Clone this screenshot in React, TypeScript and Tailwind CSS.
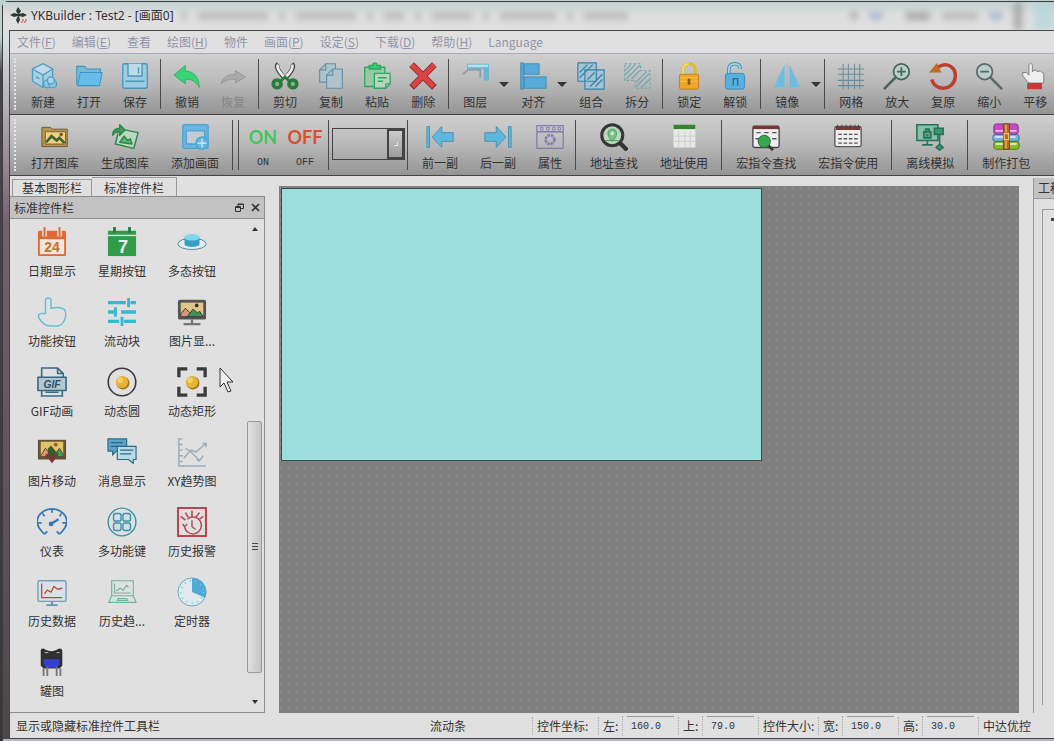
import { Fragment, type ReactNode } from 'react';

const ICONS: Record<string, ReactNode> = {
  create: (
    <g fill="none" stroke="#4f9fc4" strokeWidth="1.5" strokeLinejoin="round">
      <path d="M16 2 4 8v14l12 7 11-6V8z" fill="#a9cfe2" />
      <path d="m4 8 12 7 11-7-11-6z" fill="#c2dbe6" />
      <path d="M16 15v14M8 17l4 2" />
      <circle cx="21" cy="25" r="4.500" fill="#8cc4e2" />
      <circle cx="27" cy="25" r="4.500" fill="#8cc4e2" />
      <circle cx="25" cy="21" r="4" fill="#a9d3e8" />
    </g>
  ),
  open: (
    <g stroke="#3e96c4" strokeWidth="1.2" strokeLinejoin="round">
      <path d="M2 26V5h9l3 3h15v5" fill="#79b9d8" />
      <path d="M6 12h25l-3 15H3z" fill="#66bdea" />
    </g>
  ),
  save: (
    <g fill="none" stroke="#4796bd" strokeWidth="1.5">
      <rect x="2" y="2" width="28" height="28" rx="2" fill="#9fcbe0" />
      <path d="M8 2v14h16V2" fill="#bfdbe6" />
      <path d="M20 6v7M5 22h22" />
    </g>
  ),
  undo: <path d="M14 4 1 15l13 10v-5c7-1 12 2 16 9 0-10-5-18-16-19z" fill="#36d475" stroke="#35a960" />,
  redo: <path d="M19 10l11 7-11 7v-4c-7-1-12 1-17 5 3-8 8-11 17-11z" fill="#aaa" stroke="#949494" />,
  cut: (
    <g>
      <path d="M8 2c-3 3 0 8 8 17M24 2c3 3 0 8-8 17" fill="none" stroke="#444" strokeWidth="5" />
      <path d="M8 3c-2 3 1 8 8 15M24 3c2 3-1 8-8 15" fill="none" stroke="#eee" strokeWidth="3" />
      <circle cx="7" cy="25" r="4.500" fill="#8bad90" stroke="#287c39" strokeWidth="4" />
      <circle cx="25" cy="25" r="4.500" fill="#8bad90" stroke="#287c39" strokeWidth="4" />
      <path d="m11 22 5-5 5 5" fill="none" stroke="#287c39" strokeWidth="3" />
    </g>
  ),
  copy: (
    <g fill="#afc3cc" stroke="#6590a5" strokeWidth="1.3">
      <path d="M10 2h11v21H3V9z" />
      <path d="M18 8h11v22H11V15z" />
      <path d="M18 8v7h-7M10 2v7H3" fill="none" />
    </g>
  ),
  paste: (
    <g stroke="#2fa560" strokeWidth="1.5" strokeLinejoin="round">
      <path d="M2 6h23v22H2z" fill="#98c8a6" />
      <path d="M7 8V4h4c0-4 5-4 5 0h4v4z" fill="#35ce72" />
      <path d="M13 13h18v12l-5 5H13z" fill="#b7d5b9" />
      <path d="M17 18h10M17 22h6M31 25h-5v5" fill="none" />
    </g>
  ),
  remove: (
    <g>
      <path d="m3 3 26 26M29 3 3 29" stroke="#922c2d" strokeWidth="7.500" />
      <path d="m3 3 25 25M29 3 4 28" stroke="#dc4444" strokeWidth="5.500" />
    </g>
  ),
  layer: (
    <g>
      <path d="M7 2h25v19h-6V8H7z" fill="#6fb3cf" />
      <path d="M8 3h23v3H8z" fill="#b6e2e9" />
      <path d="m2 14 6-5h14v9" fill="none" stroke="#8b9fa5" strokeWidth="2" />
    </g>
  ),
  align: (
    <g stroke="#3989b5" fill="#58aadb">
      <path d="M2 1h3v30H2z" />
      <path d="M6 2h17v12H6zM6 17h25v13H6z" />
    </g>
  ),
  group: (
    <g fill="#a4c4d4" stroke="#367fa8" strokeWidth="1.300">
      <path d="M1 1h21v8h9v22H9v-9H1z" />
      <path d="M9 9h13v13H9zM3 12 12 3M3 18 18 3M12 20l8-8M15 28l14-14M21 28l8-8" fill="none" />
    </g>
  ),
  split: (
    <g fill="none" stroke="#6ba9ad" strokeWidth="1.3">
      <path d="M2 2h18v8h11v20H14v-9H2z" strokeDasharray="3 2" />
      <path d="m3 9 6-6M3 14 14 3M4 19 19 4M10 19l9-9M15 23l12-12M15 28l15-15M21 29l9-9" />
    </g>
  ),
  lock: (
    <g>
      <path d="M9 14V9q0-7 7-7t7 7v5" fill="none" stroke="#d9bb2c" strokeWidth="3.5" />
      <path d="M9 14V9q0-7 7-7" fill="none" stroke="#f1e363" strokeWidth="2" />
      <rect x="5" y="14" width="22" height="17" rx="2" fill="#eda62a" stroke="#c67816" />
      <path d="M6 18h20M6 22h20" stroke="#fac74e" />
      <path d="M16 19v7" stroke="#8a5c19" strokeWidth="3" />
    </g>
  ),
  unlock: (
    <g>
      <path d="M9 14V8q0-6 7-6 6 0 6 6" fill="none" stroke="#468eae" strokeWidth="4" />
      <path d="M9 14V8q0-6 7-6 6 0 6 6" fill="none" stroke="#a4d5e7" strokeWidth="2" />
      <rect x="5" y="13" width="22" height="18" rx="3" fill="#57b1e0" stroke="#348bb9" />
      <path d="M14 27v-8h5v8" fill="none" stroke="#34657b" strokeWidth="1.5" />
    </g>
  ),
  mirror: (
    <g>
      <path d="M13 4v25H1zM19 4v25h12z" fill="#6ebce1" stroke="#86bfd4" />
      <path d="M16 1v30" stroke="#84b8cc" strokeDasharray="3 1" />
    </g>
  ),
  grid: <path d="M7 2v29M13 2v29M20 2v29M26 2v29M1 8h30M1 14h30M1 21h30M1 27h30" stroke="#6b8c9d" strokeWidth="1.2" />,
  zoomIn: (
    <g fill="none" stroke="#45665b">
      <path d="M14 18 1 31" strokeWidth="3" />
      <circle cx="21" cy="11" r="9" fill="#b9cfc7" strokeWidth="2" />
      <path d="M21 6v10M16 11h10" strokeWidth="2" />
    </g>
  ),
  reset: (
    <g>
      <path d="M10 6c11-7 21 0 20 11-1 15-22 18-27 3" fill="none" stroke="#b84231" strokeWidth="4" />
      <path d="M0 12 9 1l5 11z" fill="#c66725" />
    </g>
  ),
  zoomOut: (
    <g fill="none" stroke="#5b6864">
      <path d="m17 17 14 14" strokeWidth="3" />
      <circle cx="11" cy="11" r="9" fill="#b8cfcd" strokeWidth="2" />
      <path d="M6 11h10" strokeWidth="2" />
    </g>
  ),
  pan: (
    <g>
      <path d="M9 24 2 16v-4h4l3 3V3q2-3 4 0v8l3-2 3 2 3-1 2 2q3 0 2 4v8z" fill="#eee" stroke="#777" />
      <rect x="7" y="24" width="17" height="7" rx="1" fill="#d23434" />
    </g>
  ),
  openLib: (
    <g>
      <path d="M1 5h10l2 2h17v20H1z" fill="#b8944b" stroke="#635333" />
      <path d="M5 10h23v14H5z" fill="#edd184" stroke="#6f593a" />
      <path d="m6 22 6-7 6 5 3-3 6 6" fill="none" stroke="#40602f" strokeWidth="3" />
      <circle cx="23" cy="13" r="2" fill="#76522b" />
    </g>
  ),
  buildLib: (
    <g stroke="#2f8750" strokeWidth="1.7" strokeLinejoin="round">
      <path d="m12 7 19 4-5 18-21-5 3-12" fill="#b9d9bd" />
      <path d="m10 22 5-7 4 5 3-2 2 6z" fill="#58b775" />
      <path d="M2 14Q1 7 10 6V2l6 6-6 6v-4q-6 0-8 4z" fill="#399e58" />
    </g>
  ),
  addScreen: (
    <g stroke="#4da3d2" strokeWidth="1.500">
      <rect x="2" y="2" width="29" height="27" rx="2" fill="#6ab6e0" />
      <path d="M6 9h21v15H6z" fill="#c2ccd2" />
      <circle cx="24" cy="23" r="7" fill="#67b3e0" />
      <path d="M24 18v10M19 23h10" stroke="#d7edf5" />
    </g>
  ),
  prev: (
    <g fill="#5db7df" stroke="#468eae">
      <path d="M1 4h3v24H1zM7 16 18 4v7h13v10H18v7z" />
    </g>
  ),
  next: (
    <g fill="#5db7df" stroke="#468eae">
      <path d="M28 4h3v24h-3zM25 16 14 4v7H1v10h13v7z" />
    </g>
  ),
  props: (
    <g fill="none" stroke="#817db0" strokeWidth="1.5">
      <path d="M1 3h30v26H1zM1 10h30" />
      <path d="M5 5h3v3H5zM12 5h3v3h-3zM19 5h3v3h-3zM25 5h3v3h-3z" strokeWidth="1" />
      <circle cx="16" cy="19" r="5" strokeDasharray="3 1" strokeWidth="3" />
    </g>
  ),
  addrFind: (
    <g>
      <path d="m22 22 9 9" stroke="#333" strokeWidth="5" />
      <circle cx="14" cy="14" r="12" fill="#bdd3bf" stroke="#363636" strokeWidth="3.5" />
      <path d="M14 21c-8-8-5-14 0-14s8 6 0 14zM7 20h14" fill="#79c589" stroke="#3d9b54" />
      <circle cx="14" cy="12" r="2" fill="#d8e9da" />
    </g>
  ),
  addrUse: (
    <g>
      <path d="M4 4h25v24H4z" fill="#e8e8e8" />
      <path d="M4 15h25M4 21h25M10 9v19M17 9v19M23 9v19" stroke="#ccc" />
      <path d="M4 2h25v5H4z" fill="#33862c" />
    </g>
  ),
  macroFind: (
    <g>
      <rect x="1" y="4" width="30" height="24" rx="2" fill="#eee" stroke="#444" strokeWidth="1.500" />
      <path d="M1 3h30v4H1z" fill="#743838" />
      <path d="M5 11h5M14 11h5M23 11h5M23 18h5M4 18h4" stroke="#555" strokeWidth="1.5" />
      <path d="m19 26 5 5" stroke="#333" strokeWidth="3" />
      <circle cx="14" cy="21" r="7" fill="#35a84d" stroke="#2c5534" />
    </g>
  ),
  macroUse: (
    <g>
      <rect x="1" y="4" width="30" height="23" rx="2" fill="#eee" stroke="#555" strokeWidth="1.5" />
      <path d="M2 4h28v4H2z" fill="#793c38" />
      <path d="M5 13h22M5 18h22M5 23h22" stroke="#555" strokeWidth="1.5" strokeDasharray="4 2" />
      <path d="M4 2v4M9 2v4M14 2v4M19 2v4M24 2v4M28 2v4" stroke="#444" />
    </g>
  ),
  offline: (
    <g stroke="#267258" strokeWidth="1.8" fill="none">
      <path d="M1 2h24v18H1zM13 20v4M7 25h12" fill="#89bea9" />
      <path d="M9 10h8v7H9zM11 10V7h4v3M13 13v2" fill="#54a486" />
      <path d="M21 6h10v7H21zM27 13v11M23 28l4-4 4 4-4 3z" fill="#3d9473" />
    </g>
  ),
  pack: (
    <g>
      <rect x="2" y="1" width="28" height="12" rx="3" fill="#c54bc5" stroke="#803286" />
      <rect x="1" y="13" width="30" height="8" rx="3" fill="#6db4e6" stroke="#356780" />
      <rect x="2" y="21" width="29" height="9" rx="3" fill="#8cbc28" stroke="#486d20" />
      <path d="M4 9h24M3 16h24M4 24h24" stroke="#eee" strokeWidth="1.5" />
      <path d="M13 1h7v29h-7z" fill="#b7652a" stroke="#71421f" />
      <path d="M14 12h5v7h-5zM16 2v8M16 20v9" fill="none" stroke="#e6c65c" strokeWidth="1.500" />
    </g>
  ),
  date: (
    <g>
      <rect x="1" y="4" width="30" height="27" rx="2" fill="#df6933" />
      <path d="M3 13h26v16H3z" fill="#f1e7dc" />
      <path d="M8 0v10M24 0v10" stroke="#e0e0e0" strokeWidth="5" />
      <path d="M8 0v10M24 0v10" stroke="#df6933" strokeWidth="2" />
      <text x="16" y="27" textAnchor="middle" fontSize="15" fontWeight="700" fontFamily="Liberation Sans" fill="#c86f2d">24</text>
    </g>
  ),
  week: (
    <g>
      <path d="M1 4h30v27H1z" fill="#309c47" />
      <path d="M8 0v6M24 0v6" stroke="#277b3d" strokeWidth="3" />
      <path d="M1 9h30" stroke="#e0e0e0" strokeWidth="1.5" />
      <text x="17" y="28" textAnchor="middle" fontSize="20" fontWeight="700" fontFamily="Liberation Sans" fill="#eee">7</text>
    </g>
  ),
  multi: (
    <g>
      <ellipse cx="16" cy="18" rx="15" ry="6" fill="#e8eeee" stroke="#528b9b" />
      <path d="M8 11v8c2 3 14 3 16 0v-8z" fill="#3a9fc4" />
      <ellipse cx="16" cy="11" rx="8" ry="3.500" fill="#82d6ea" />
    </g>
  ),
  hand: (
    <path d="M9 18V4q0-3 3-3t3 3v8c5-1 10-2 14 1 2 3 2 8 0 12-2 5-5 6-9 6h-5C9 31 4 27 2 22c-2-5 4-5 7-4" fill="none" stroke="#67bed4" strokeWidth="1.5" />
  ),
  flow: (
    <g stroke="#36b8d0" strokeWidth="3.5">
      <path d="M1 6h19M25 6h6M1 16h8M15 16h16M1 26h12M18 26h13" />
      <path d="M23 1v10M9 11v10M16 21v10" strokeWidth="3" />
    </g>
  ),
  picture: (
    <g>
      <rect x="1" y="3" width="30" height="21" rx="2" fill="#555" />
      <path d="M4 6h24v15H4z" fill="#dfc887" />
      <path d="m4 18 5-6 7 7v2H4z" fill="#d99674" stroke="#333" />
      <path d="m11 21 6-8 5 4 2-2 4 6z" fill="#3b955a" stroke="#333" />
      <circle cx="21" cy="9" r="2" fill="#333" />
      <path d="M16 24v5M7 29h18" stroke="#777" strokeWidth="2.5" />
    </g>
  ),
  gif: (
    <g fill="none" stroke="#386882" strokeWidth="1.7">
      <path d="M5 11V1h17l6 6v4M22 1v6h6M5 25v6h22v-6M9 27h14" />
      <path d="M1 11h30v14H1z" fill="#b3c7d0" />
      <text x="16" y="22" textAnchor="middle" fontSize="11" fontStyle="italic" fontWeight="700" fontFamily="Liberation Sans" fill="#26546d" stroke="none">GIF</text>
    </g>
  ),
  circle: (
    <g>
      <circle cx="16" cy="16" r="14.7" fill="none" stroke="#3a3a3a" strokeWidth="1.7" />
      <circle cx="17" cy="17" r="7" fill="#a17628" />
      <circle cx="16" cy="16" r="6.5" fill="#e6b532" />
      <circle cx="14" cy="14" r="3" fill="#f3cf65" />
    </g>
  ),
  rect: (
    <g>
      <path d="M2 11V2h9M21 2h9v9M30 21v9h-9M11 30H2v-9" fill="none" stroke="#3a3a3a" strokeWidth="3.5" />
      <circle cx="17" cy="17" r="7" fill="#a17628" />
      <circle cx="16" cy="16" r="6.5" fill="#e6b532" />
      <circle cx="14" cy="14" r="3" fill="#f3cf65" />
    </g>
  ),
  picMove: (
    <g>
      <path d="M1 3h30v21H1z" fill="#655333" />
      <path d="M4 5h24v16H4z" fill="#e2c466" />
      <path d="m4 20 5-8 6 7v2H4z" fill="#dd9a72" stroke="#444" />
      <path d="m17 21 7-9 4 7v2z" fill="#37a44e" stroke="#444" />
      <path d="m12 12 3-3 4 5 4 5-6 6-6-5z" fill="#395a31" />
      <circle cx="20" cy="8" r="2" fill="#96562c" />
      <path d="M12 23h8l-4 5z" fill="#922b36" />
      <path d="M9 20h14" stroke="#922b36" strokeWidth="3" strokeDasharray="3 2" />
    </g>
  ),
  message: (
    <g stroke="#2e6983" strokeWidth="1.2">
      <path d="M1 2h20v13H10l-4 4v-4H1z" fill="#5ba4ca" />
      <path d="M11 10h20v14h-3v4l-5-4H11z" fill="#b6dce7" />
      <path d="M4 6h13M4 10h8M14 14h14M14 18h12" />
    </g>
  ),
  trend: (
    <g fill="none" stroke="#98aab9" strokeWidth="1.5">
      <path d="M2 1v30h29M2 2h4M2 8h4M2 14h4M2 20h4M2 26h4" />
      <path d="m7 23 8-9 5 2 11-9M27 7h4v4M9 12l6 4 9 9 4-5M24 26l-3-2" />
    </g>
  ),
  gauge: (
    <g fill="none" stroke="#3676b5" strokeWidth="1.8">
      <path d="M8 29C-8 15 4 2 16 2s24 13 8 27M16 2v4M6 7l2 3M26 7l-2 3M1 17h4M31 17h-4M8 29l3-3M24 29l-3-3" />
      <path d="m15 18 8-5" strokeWidth="2.5" />
      <circle cx="15" cy="18" r="1.6" fill="#3676b5" />
    </g>
  ),
  multiKey: (
    <g fill="none" stroke="#3d92a8" strokeWidth="1.5">
      <circle cx="16" cy="16" r="14.8" />
      <rect x="7" y="7" width="8" height="8" rx="2" fill="#cfe0e4" />
      <rect x="17" y="7" width="8" height="8" rx="2" fill="#cfe0e4" />
      <rect x="7" y="17" width="8" height="8" rx="2" fill="#cfe0e4" />
      <rect x="17" y="17" width="8" height="8" rx="2" fill="#cfe0e4" />
    </g>
  ),
  alarm: (
    <g fill="none" stroke="#b54850">
      <path d="M1 1h30v30H1z" strokeWidth="2.4" />
      <path d="M16 4v7M9 6l3 5M24 6l-4 5M4 10l5 4M28 10l-4 3" strokeWidth="1.7" />
      <path d="M8 20a9 9 0 1 0 3-7M16 14v7l4 3M6 18l2 3 3-3" strokeWidth="1.5" />
    </g>
  ),
  histData: (
    <g fill="none">
      <rect x="1" y="4" width="30" height="22" rx="2" fill="#dae1e6" stroke="#769eb5" strokeWidth="1.5" />
      <path d="M5 7v15h22M8 18l3-4 4 2 3-6 4 3 5-1" stroke="#b94f3e" strokeWidth="1.4" />
      <path d="M16 26v4M10 30h12" stroke="#6394b1" strokeWidth="2" />
    </g>
  ),
  histTrend: (
    <g fill="none" stroke="#70b59b" strokeWidth="1.2">
      <path d="M5 4h23v16H5zM5 20l-3 7h29l-3-7M12 23h9l1 2H11zM8 7v10h17" />
      <path d="m10 15 4-3 3 2 4-5 2 2" />
    </g>
  ),
  timer: (
    <g>
      <circle cx="16" cy="16" r="15" fill="#ddebf0" stroke="#67a8bf" />
      <path d="M16 1a15 15 0 0 1 14 21l-14-6z" fill="#4fa9d6" />
      <circle cx="16" cy="16" r="12" fill="none" stroke="#8fbccd" strokeDasharray="1 5" strokeWidth="2" />
    </g>
  ),
  tank: (
    <g>
      <path d="M4 3q2-3 5 0 7 3 12 0 5-3 6 1v16l-3 3H7l-3-3z" fill="#303030" />
      <path d="M7 13h17v5l-3 4H10l-3-4z" fill="#353ed5" />
      <path d="M7 23v8M11 21v10M21 21v10M25 23v8" stroke="#777" strokeWidth="2" />
      <path d="M8 6h4M21 6h3" stroke="#ccc" />
    </g>
  ),
};

function Icon({ name, className }: { name: string; className: string }) {
  return (
    <svg viewBox="0 0 32 32" className={className} aria-hidden="true">
      {ICONS[name]}
    </svg>
  );
}

interface Tool {
  icon: string;
  label: string;
  menu?: boolean;
  disabled?: boolean;
}

const MAIN_TOOLS: Tool[][] = [
  [
    { icon: 'create', label: '新建' },
    { icon: 'open', label: '打开' },
    { icon: 'save', label: '保存' },
  ],
  [
    { icon: 'undo', label: '撤销' },
    { icon: 'redo', label: '恢复', disabled: true },
  ],
  [
    { icon: 'cut', label: '剪切' },
    { icon: 'copy', label: '复制' },
    { icon: 'paste', label: '粘贴' },
    { icon: 'remove', label: '删除' },
  ],
  [
    { icon: 'layer', label: '图层', menu: true },
    { icon: 'align', label: '对齐', menu: true },
    { icon: 'group', label: '组合' },
    { icon: 'split', label: '拆分' },
  ],
  [
    { icon: 'lock', label: '锁定' },
    { icon: 'unlock', label: '解锁' },
  ],
  [{ icon: 'mirror', label: '镜像', menu: true }],
  [
    { icon: 'grid', label: '网格' },
    { icon: 'zoomIn', label: '放大' },
    { icon: 'reset', label: '复原' },
    { icon: 'zoomOut', label: '缩小' },
    { icon: 'pan', label: '平移' },
  ],
];

const LIBRARY_TOOLS: Tool[] = [
  { icon: 'openLib', label: '打开图库' },
  { icon: 'buildLib', label: '生成图库' },
  { icon: 'addScreen', label: '添加画面' },
];

const SCREEN_TOOLS: Tool[][] = [
  [
    { icon: 'prev', label: '前一副' },
    { icon: 'next', label: '后一副' },
    { icon: 'props', label: '属性' },
  ],
  [
    { icon: 'addrFind', label: '地址查找' },
    { icon: 'addrUse', label: '地址使用' },
  ],
  [
    { icon: 'macroFind', label: '宏指令查找' },
    { icon: 'macroUse', label: '宏指令使用' },
  ],
  [{ icon: 'offline', label: '离线模拟' }],
  [{ icon: 'pack', label: '制作打包' }],
];

const MENUS = [
  { text: '文件', key: 'F' },
  { text: '编辑', key: 'E' },
  { text: '查看' },
  { text: '绘图', key: 'H' },
  { text: '物件' },
  { text: '画面', key: 'P' },
  { text: '设定', key: 'S' },
  { text: '下载', key: 'D' },
  { text: '帮助', key: 'H' },
];

const WIDGETS: Tool[] = [
  { icon: 'date', label: '日期显示' },
  { icon: 'week', label: '星期按钮' },
  { icon: 'multi', label: '多态按钮' },
  { icon: 'hand', label: '功能按钮' },
  { icon: 'flow', label: '流动块' },
  { icon: 'picture', label: '图片显...' },
  { icon: 'gif', label: 'GIF动画' },
  { icon: 'circle', label: '动态圆' },
  { icon: 'rect', label: '动态矩形' },
  { icon: 'picMove', label: '图片移动' },
  { icon: 'message', label: '消息显示' },
  { icon: 'trend', label: 'XY趋势图' },
  { icon: 'gauge', label: '仪表' },
  { icon: 'multiKey', label: '多功能键' },
  { icon: 'alarm', label: '历史报警' },
  { icon: 'histData', label: '历史数据' },
  { icon: 'histTrend', label: '历史趋...' },
  { icon: 'timer', label: '定时器' },
  { icon: 'tank', label: '罐图' },
];

const TOOLBAR =
  'flex h-[61px] shrink-0 overflow-hidden border-b border-[#444] bg-linear-to-b from-[#d0d0d0] via-[#b8b8b8] to-[#949494]';

function Grip() {
  return <span className="my-1 ml-1 mr-1 w-[2px] shrink-0 border-l-2 border-dotted border-[#e6e6e6]" />;
}

function Divider() {
  return <span className="my-[5px] ml-[2px] mr-[3px] w-px shrink-0 bg-[#4a4a4a]" />;
}

function ToolButton({ tool }: { tool: Tool }) {
  return (
    <>
      <button disabled={tool.disabled} className="flex shrink-0 flex-col items-center px-[11px] pt-2 disabled:text-[#858585]">
        <Icon name={tool.icon} className="-mx-1 h-[28px] w-[28px]" />
        <span className="mt-1 whitespace-nowrap leading-4">{tool.label}</span>
      </button>
      {tool.menu && (
        <button aria-label={tool.label} className="flex w-3 shrink-0 items-center justify-center">
          <span className="border-x-[5px] border-t-[5px] border-x-transparent border-t-[#333]" />
        </button>
      )}
    </>
  );
}

function TitleBar() {
  return (
    <header className="flex h-7 shrink-0 items-center overflow-hidden bg-linear-to-b from-[#c3d2d2] via-[#dedede] to-[#e0e0e0] pl-[7px]">
      <svg viewBox="0 0 18 18" className="h-[18px] w-[18px]" aria-hidden="true">
        <path d="M8 0 6 4l2 3-4-1-4 2 4 2 4-1-2 4 2 4 2-4-1-4 4 1 4-2-4-2-4 1 2-3z" fill="#2d3d33" />
        <path d="M12 13h5M11 15h6" stroke="#c43636" strokeDasharray="2 1" />
      </svg>
      <h1 className="ml-[3px] whitespace-nowrap font-['Noto_Sans','Noto_Sans_CJK_SC',sans-serif] text-[12px] text-[#333]">
        YKBuilder : Test2 - [画面0]
      </h1>
      <div className="ml-2 flex flex-1 items-center gap-3 opacity-60 blur-[3px]" aria-hidden="true">
        <span className="h-2 w-1 bg-[#999]" />
        <span className="h-2 w-[70px] bg-[#aaa]" />
        <span className="h-2 w-1 bg-[#999]" />
        <span className="h-2 w-[60px] bg-[#aaa]" />
        <span className="h-2 w-1 bg-[#999]" />
        <span className="h-2 w-5 bg-[#aaa]" />
        <span className="h-2 w-1 bg-[#999]" />
        <span className="h-2 w-10 bg-[#aaa]" />
        <span className="h-2 w-1 bg-[#999]" />
        <span className="h-2 w-14 bg-[#aaa]" />
        <span className="h-2 w-1 bg-[#999]" />
        <span className="h-2 w-11 bg-[#aaa]" />
        <span className="ml-auto h-2 w-2 bg-[#999]" />
        <span className="h-2 w-3 bg-[#8ea2c8]" />
        <span className="ml-3 h-2 w-6 bg-[#888]" />
        <span className="h-2 w-9 bg-[#aaa]" />
        <span className="h-2 w-3 bg-[#8ea2c8]" />
        <span className="h-7 w-2 bg-[#888]" />
        <span className="h-7 w-5 bg-[#a9d6dc]" />
      </div>
    </header>
  );
}

function WidgetPanel() {
  return (
    <aside className="flex w-[255px] shrink-0 flex-col">
      <div className="flex h-5 items-end pl-[2px]" role="tablist">
        <button role="tab" aria-selected="false" className="h-[17px] border border-b-0 border-[#999] px-[9px] leading-4">
          基本图形栏
        </button>
        <button role="tab" aria-selected="true" className="h-[19px] border-r border-t border-[#999] px-3 leading-5">
          标准控件栏
        </button>
      </div>
      <div className="flex h-[23px] items-center border-b border-r border-t border-[#8c8c8c] bg-[#c2c2c2] pl-1 pr-1">
        <h2 className="flex-1">标准控件栏</h2>
        <button aria-label="浮动" className="mr-[7px]">
          <svg viewBox="0 0 9 9" className="h-[9px] w-[9px]" fill="none" stroke="#333">
            <path d="M3 3V1h5.500v4.500H6M3 1.500h5.500" />
            <path d="M.5 3.500h5v5h-5zM.5 4.500h5" />
          </svg>
        </button>
        <button aria-label="关闭">
          <svg viewBox="0 0 9 9" className="h-[9px] w-[9px]" stroke="#333" strokeWidth="1.600">
            <path d="m1 1 7 7M8 1 1 8" />
          </svg>
        </button>
      </div>
      <div className="relative flex flex-1 border-b border-r border-[#8c8c8c] pl-[7px]">
        <div className="grid flex-1 auto-rows-[70px] grid-cols-[70px_70px_70px] content-start">
          {WIDGETS.map((widget) => (
            <button key={widget.icon} className="flex flex-col items-center pt-2">
              <Icon name={widget.icon} className="h-[30px] w-[30px]" />
              <span className="mt-[6px] whitespace-nowrap leading-4">{widget.label}</span>
            </button>
          ))}
        </div>
        <div className="mr-[2px] flex w-[15px] flex-col items-center">
          <button aria-label="向上" className="flex h-5 items-center">
            <span className="border-x-[3px] border-b-[4px] border-x-transparent border-b-[#333]" />
          </button>
          <span className="grow-[187]" />
          <div className="flex w-full grow-[250] flex-col items-center justify-center gap-px rounded-[2px] border border-[#999] bg-linear-to-r from-[#e0e0e0] to-[#c6c6c6]">
            <span className="h-px w-[6px] bg-[#444]" />
            <span className="mt-px h-px w-[6px] bg-[#444]" />
            <span className="mt-px h-px w-[6px] bg-[#444]" />
          </div>
          <span className="grow-[20]" />
          <button aria-label="向下" className="flex h-5 items-center">
            <span className="border-x-[3px] border-t-[4px] border-x-transparent border-t-[#333]" />
          </button>
        </div>
        <svg viewBox="0 0 16 26" className="absolute left-[209px] top-[148px] h-[26px] w-4" aria-hidden="true">
          <path d="M1 1v19l4-4 4 9 3-1-4-9h6z" fill="#eee" stroke="#333" />
        </svg>
      </div>
    </aside>
  );
}

function StatusField({ id, label, value }: { id: string; label: string; value: string }) {
  return (
    <>
      <label htmlFor={id} className="w-6 shrink-0 border-l border-dotted border-[#aaa] pl-1">
        {label}
      </label>
      <div className="flex shrink-0 items-center border-l border-dotted border-[#aaa] px-1">
        <input
          id={id}
          defaultValue={value}
          className="h-5 w-[47px] border-t border-[#999] bg-transparent pl-1 font-['Liberation_Mono',monospace] text-[10px] outline-none"
        />
      </div>
    </>
  );
}

export default function App() {
  return (
    <div className="flex min-h-screen overflow-hidden bg-linear-to-b from-[#bcd0d0] from-5% via-[#4a434c] via-10% to-[#39363b] pl-[2px] pt-px font-['Noto_Sans_CJK_SC',sans-serif] text-[12px] text-[#333]">
      <div className="flex min-w-0 flex-1 flex-col rounded-tl-md border-l border-t border-[#3c3c3c] bg-linear-to-b from-[#d8e0e0] from-5% via-[#75616e] via-30% to-[#4c474b]">
        <TitleBar />
        <div className="ml-[6px] flex flex-1 flex-col border-b border-l border-t border-[#444] bg-[#e0e0e0]">
          <nav className="flex h-[23px] shrink-0 items-center gap-4 border-b border-[#a6acb6] pl-[7px] text-[#9494ac]">
            {MENUS.map((menu) => (
              <button key={menu.text} className="whitespace-nowrap">
                {menu.text}
                {menu.key && (
                  <>
                    (<u>{menu.key}</u>)
                  </>
                )}
              </button>
            ))}
            <button>Language</button>
          </nav>

          <div className={TOOLBAR} role="toolbar">
            <Grip />
            {MAIN_TOOLS.map((group, i) => (
              <Fragment key={i}>
                {i > 0 && <Divider />}
                {group.map((tool) => (
                  <ToolButton key={tool.icon} tool={tool} />
                ))}
              </Fragment>
            ))}
          </div>

          <div className={TOOLBAR} role="toolbar">
            <Grip />
            {LIBRARY_TOOLS.map((tool) => (
              <ToolButton key={tool.icon} tool={tool} />
            ))}
            <Divider />
            <Divider />
            <button className="flex w-[42px] shrink-0 flex-col items-center pt-2">
              <span className="font-['Lato',sans-serif] text-[18px] font-bold leading-7 text-[#45c45b]">ON</span>
              <span className="mt-1 font-['Liberation_Mono',monospace] text-[10px] leading-4">ON</span>
            </button>
            <button className="flex w-[42px] shrink-0 flex-col items-center pt-2">
              <span className="font-['Lato',sans-serif] text-[18px] font-bold leading-7 text-[#d9502f]">OFF</span>
              <span className="mt-1 font-['Liberation_Mono',monospace] text-[10px] leading-4">OFF</span>
            </button>
            <Divider />
            <div className="mt-[13px] flex h-8 w-[73px] shrink-0 border border-[#444]">
              <select aria-label="状态" className="min-w-0 flex-1 appearance-none bg-transparent outline-none" />
              <span className="flex w-[17px] items-center justify-center border-2 border-[#444] bg-linear-to-b from-[#ccc] to-[#9c9c9c]">
                <span className="h-1 w-1 border-b border-r border-[#e6e6e6]" />
              </span>
            </div>
            {SCREEN_TOOLS.map((group, i) => (
              <Fragment key={i}>
                <Divider />
                {group.map((tool) => (
                  <ToolButton key={tool.icon} tool={tool} />
                ))}
              </Fragment>
            ))}
          </div>

          <div className="flex flex-1">
            <WidgetPanel />
            <main className="ml-[14px] mt-[10px] min-w-0 flex-1 bg-[#808080] bg-[conic-gradient(from_90deg_at_7px_7px,#a8a8a8_25%,transparent_0)] bg-[length:8px_8px] bg-[position:2px_3px] pl-[2px] pt-[2px]">
              <div className="h-[273px] w-[481px] border border-[#3c4c4c] bg-[#9bdedb]" />
            </main>
            <aside className="ml-[14px] mt-[2px] flex w-[21px] shrink-0 flex-col overflow-hidden border-l border-[#999]">
              <h2 className="h-[21px] shrink-0 overflow-hidden whitespace-nowrap border-b border-[#999] bg-[#c2c2c2] pl-1 leading-5">
                工程
              </h2>
              <div className="mb-2 ml-2 mt-[10px] flex-1 border-l border-t border-[#999] pl-2 pt-2">
                <span className="block h-[3px] w-[3px] bg-[#444]" />
              </div>
            </aside>
          </div>

          <footer className="flex h-[25px] shrink-0 items-center overflow-hidden whitespace-nowrap pl-[6px]">
            <p className="w-[414px] shrink-0">显示或隐藏标准控件工具栏</p>
            <p className="flex-1">流动条</p>
            <p className="w-[66px] shrink-0 border-l border-dotted border-[#aaa] pl-1">控件坐标:</p>
            <StatusField id="pos-left" label="左:" value="160.0" />
            <StatusField id="pos-top" label="上:" value="79.0" />
            <p className="w-[60px] shrink-0 border-l border-dotted border-[#aaa] pl-1">控件大小:</p>
            <StatusField id="size-width" label="宽:" value="150.0" />
            <StatusField id="size-height" label="高:" value="30.0" />
            <p className="w-[76px] shrink-0 border-l border-dotted border-[#aaa] pl-1">中达优控</p>
          </footer>
        </div>
        <div className="h-[2px] shrink-0 bg-[#b8b8c0]" />
      </div>
    </div>
  );
}
